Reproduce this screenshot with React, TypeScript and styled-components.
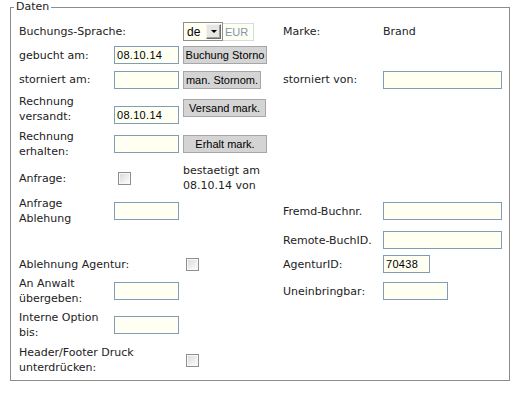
import React from 'react';
import styled, { createGlobalStyle } from 'styled-components';

const GlobalStyle = createGlobalStyle`
  body {
    margin: 0;
    background: #ffffff;
    font-family: 'DejaVu Sans', Verdana, sans-serif;
    font-size: 11px;
    color: #222222;
  }
`;

const Page = styled.div`
  padding: 0 0 0 10px;
  width: 514px;
  height: 393px;
  box-sizing: border-box;
`;

const Fieldset = styled.fieldset`
  margin: 0;
  width: 500px;
  box-sizing: border-box;
  border: 1px solid #8c8c8c;
  padding: 0 4px 4px 8px;
  min-width: 0;
`;

const Legend = styled.legend`
  margin-left: -5px;
  padding: 0 2px;
  font-size: 11px;
  line-height: 14px;
  color: #222222;
`;

const Form = styled.div`
  display: flex;
  flex-direction: column;
  margin-top: 6px;
`;

const Row = styled.div<{ $h: number }>`
  display: grid;
  grid-template-columns: 95px 69px 100px 100px 1fr;
  align-items: center;
  height: ${(p) => p.$h}px;
`;

const Label = styled.div<{ $span?: number }>`
  grid-column: span ${(p) => p.$span ?? 1};
  line-height: 15px;
  white-space: nowrap;
`;

const Empty = styled.span``;

const TextInput = styled.input<{ $w: number; $nudge?: number }>`
  width: ${(p) => p.$w}px;
  height: 18px;
  box-sizing: border-box;
  margin: ${(p) => (p.$nudge ?? 0) * 2}px 0 0 0;
  padding: 0 2px;
  border: 1px solid #7f9db9;
  background: #fffff2;
  font-family: 'Liberation Sans', Arial, sans-serif;
  font-size: 11px;
  letter-spacing: 0.3px;
  color: #000000;
  outline: none;
`;

const Button = styled.button<{ $w: number; $nudge?: number }>`
  width: ${(p) => p.$w}px;
  height: 18px;
  box-sizing: border-box;
  margin: 0 0 ${(p) => (p.$nudge ?? 0) * 2}px 0;
  padding: 0;
  border: 1px solid #a6a6a6;
  background: #d4d4d4;
  font-family: 'Liberation Sans', Arial, sans-serif;
  font-size: 11px;
  color: #000000;
  text-align: center;
`;

const Check = styled.input.attrs({ type: 'checkbox' })<{ $offset: number }>`
  appearance: none;
  margin: 0 0 0 ${(p) => p.$offset}px;
  width: 13px;
  height: 13px;
  box-sizing: border-box;
  border: 1px solid #8e8e8e;
  background: linear-gradient(135deg, #d8d8d8 0%, #f4f4f4 70%, #ffffff 100%);
  box-shadow: inset 0 0 0 1px #f8f8f8;
`;

const LangGroup = styled.div`
  display: flex;
  align-items: center;
`;

const Select = styled.div`
  display: flex;
  align-items: center;
  width: 40px;
  height: 19px;
  box-sizing: border-box;
  border: 1px solid #8f8f8f;
  background: #fffff2;
  padding: 0 1px 0 3px;
  font-family: 'Liberation Sans', Arial, sans-serif;
  font-size: 12px;
  color: #000000;
`;

const SelectValue = styled.span`
  flex: 1;
`;

const Arrow = styled.span`
  display: flex;
  align-items: center;
  justify-content: center;
  width: 15px;
  height: 15px;
  box-sizing: border-box;
  border: 1px solid #6e6e6e;
  border-top-color: #f4f4f4;
  border-left-color: #f4f4f4;
  background: #e6e6e6;
  box-shadow: inset -1px -1px 0 #a0a0a0;

  &::after {
    content: '';
    border-left: 3px solid transparent;
    border-right: 3px solid transparent;
    border-top: 3px solid #000000;
  }
`;

const Currency = styled.span`
  display: flex;
  align-items: center;
  width: 31px;
  height: 18px;
  box-sizing: border-box;
  border: 1px solid #d2dbe6;
  border-left: none;
  background: #fffff2;
  padding-left: 2px;
  font-family: 'Liberation Sans', Arial, sans-serif;
  font-size: 11px;
  color: #7d96b8;
`;

const Note = styled.div`
  line-height: 15px;
  white-space: nowrap;
  margin-top: -1px;
`;

const App: React.FC = () => {
  return (
    <Page>
      <GlobalStyle />
      <Fieldset>
        <Legend>Daten</Legend>
        <Form>
          <Row $h={23}>
            <Label $span={2}>Buchungs-Sprache:</Label>
            <LangGroup>
              <Select>
                <SelectValue>de</SelectValue>
                <Arrow />
              </Select>
              <Currency>EUR</Currency>
            </LangGroup>
            <Label>Marke:</Label>
            <Label>Brand</Label>
          </Row>

          <Row $h={24}>
            <Label>gebucht am:</Label>
            <TextInput $w={65} defaultValue="08.10.14" />
            <Button $w={84}>Buchung Storno</Button>
          </Row>

          <Row $h={25}>
            <Label>storniert am:</Label>
            <TextInput $w={65} />
            <Button $w={78}>man. Stornom.</Button>
            <Label>storniert von:</Label>
            <TextInput $w={119} />
          </Row>

          <Row $h={34}>
            <Label>
              Rechnung
              <br />
              versandt:
            </Label>
            <TextInput $w={65} $nudge={6} defaultValue="08.10.14" />
            <Button $w={83} $nudge={1}>Versand mark.</Button>
          </Row>

          <Row $h={36}>
            <Label>
              Rechnung
              <br />
              erhalten:
            </Label>
            <TextInput $w={65} />
            <Button $w={84}>Erhalt mark.</Button>
          </Row>

          <Row $h={32}>
            <Label>Anfrage:</Label>
            <Check $offset={4} />
            <Note>
              bestaetigt am
              <br />
              08.10.14 von
            </Note>
          </Row>

          <Row $h={34}>
            <Label>
              Anfrage
              <br />
              Ablehung
            </Label>
            <TextInput $w={65} />
            <Empty />
            <Label>Fremd-Buchnr.</Label>
            <TextInput $w={119} />
          </Row>

          <Row $h={24}>
            <Empty />
            <Empty />
            <Empty />
            <Label>Remote-BuchID.</Label>
            <TextInput $w={119} />
          </Row>

          <Row $h={24}>
            <Label $span={2}>Ablehnung Agentur:</Label>
            <Check $offset={3} />
            <Label>AgenturID:</Label>
            <TextInput $w={47} defaultValue="70438" />
          </Row>

          <Row $h={30}>
            <Label>
              An Anwalt
              <br />
              übergeben:
            </Label>
            <TextInput $w={65} />
            <Empty />
            <Label>Uneinbringbar:</Label>
            <TextInput $w={65} />
          </Row>

          <Row $h={38}>
            <Label>
              Interne Option
              <br />
              bis:
            </Label>
            <TextInput $w={65} />
          </Row>

          <Row $h={32}>
            <Label $span={2}>
              Header/Footer Druck
              <br />
              unterdrücken:
            </Label>
            <Check $offset={3} />
          </Row>
        </Form>
      </Fieldset>
    </Page>
  );
};

export default App;
